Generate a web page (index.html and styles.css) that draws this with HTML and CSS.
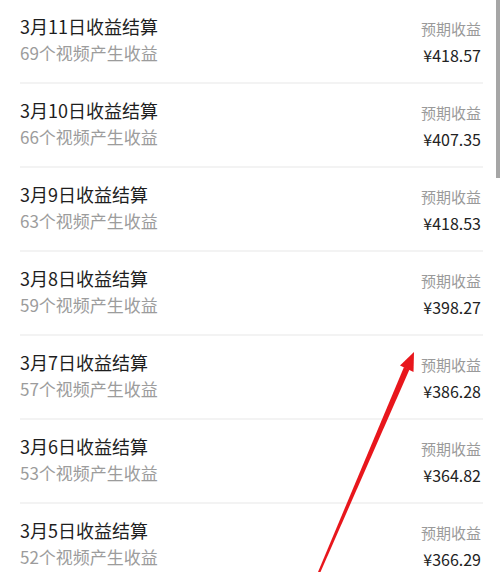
FILE: index.html
```html
<!DOCTYPE html>
<html lang="zh">
<head>
<meta charset="utf-8">
<link rel="stylesheet" href="styles.css">
</head>
<body>
<div class="page">
  <ul class="list">
    <li class="row"><div class="left"><div class="title">3月11日收益结算</div><div class="sub">69个视频产生收益</div></div><div class="right"><div class="label">预期收益</div><div class="amount">¥418.57</div></div></li>
    <li class="row"><div class="left"><div class="title">3月10日收益结算</div><div class="sub">66个视频产生收益</div></div><div class="right"><div class="label">预期收益</div><div class="amount">¥407.35</div></div></li>
    <li class="row"><div class="left"><div class="title">3月9日收益结算</div><div class="sub">63个视频产生收益</div></div><div class="right"><div class="label">预期收益</div><div class="amount">¥418.53</div></div></li>
    <li class="row"><div class="left"><div class="title">3月8日收益结算</div><div class="sub">59个视频产生收益</div></div><div class="right"><div class="label">预期收益</div><div class="amount">¥398.27</div></div></li>
    <li class="row"><div class="left"><div class="title">3月7日收益结算</div><div class="sub">57个视频产生收益</div></div><div class="right"><div class="label">预期收益</div><div class="amount">¥386.28</div></div></li>
    <li class="row"><div class="left"><div class="title">3月6日收益结算</div><div class="sub">53个视频产生收益</div></div><div class="right"><div class="label">预期收益</div><div class="amount">¥364.82</div></div></li>
    <li class="row"><div class="left"><div class="title">3月5日收益结算</div><div class="sub">52个视频产生收益</div></div><div class="right"><div class="label">预期收益</div><div class="amount">¥366.29</div></div></li>
  </ul>
  <div class="scrollbar"></div>
  <svg class="arrow" width="500" height="572" viewBox="0 0 500 572">
    <polygon points="318,572 320.5,572 409.5,369.5 404,367" fill="#e8161c"/>
    <polygon points="414,352 413.5,372 400,365.5" fill="#e8161c"/>
  </svg>
</div>
</body>
</html>
```

FILE: styles.css
```css
html, body {
  margin: 0;
  padding: 0;
  background: #fff;
}
body {
  font-family: "Noto Sans CJK SC", "Noto Sans", sans-serif;
  width: 500px;
  height: 572px;
  overflow: hidden;
}
.page {
  position: relative;
  width: 500px;
  height: 572px;
  overflow: hidden;
}
.list {
  list-style: none;
  margin: 0;
  padding: 0 17px 0 20px;
}
.row {
  display: flex;
  justify-content: space-between;
  align-items: flex-start;
  height: 82px;
  border-bottom: 2px solid #f3f3f3;
  padding-top: 0;
}
.left {
  padding-top: 13px;
}
.title {
  font-size: 18px;
  line-height: 26px;
  color: #1e1e1e;
}
.sub {
  font-size: 17px;
  line-height: 26px;
  color: #9c9c9c;
  margin-top: 1px;
}
.right {
  padding-top: 17px;
  padding-right: 2px;
  text-align: right;
}
.label {
  font-size: 15px;
  line-height: 24px;
  color: #9a9a9a;
}
.amount {
  font-size: 16px;
  line-height: 24px;
  color: #222;
  margin-top: 2px;
}
.scrollbar {
  position: absolute;
  top: 0;
  right: 0;
  width: 4px;
  height: 178px;
  background: #a6a6a6;
}
.arrow {
  position: absolute;
  left: 0;
  top: 0;
}
```
